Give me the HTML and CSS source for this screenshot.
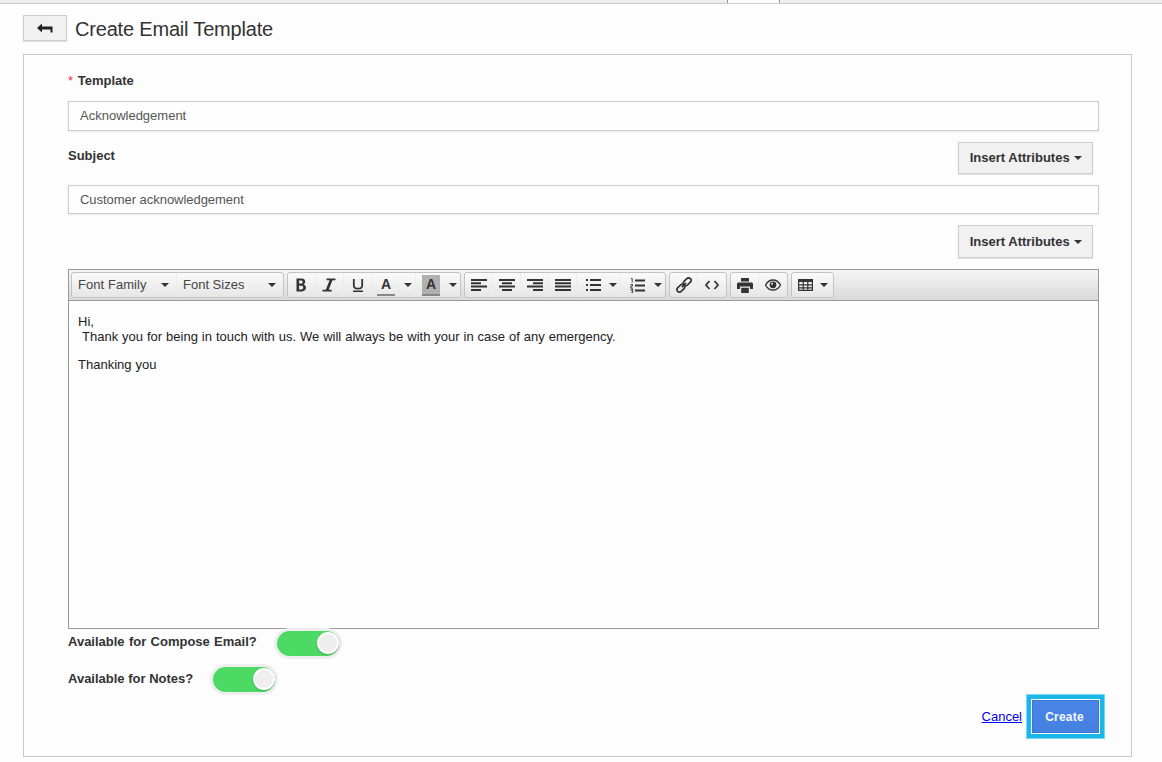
FILE: index.html
```html
<!DOCTYPE html>
<html lang="en">
<head>
<meta charset="utf-8">
<title>Create Email Template</title>
<link rel="stylesheet" href="styles.css">
</head>
<body>
<div class="topbar"><div class="tab"></div></div>
<header class="head">
  <button class="back" type="button" aria-label="Back">
    <svg width="16" height="10" viewBox="0 0 16 10"><path d="M0 5 L5 0.5 V3.5 H15.5 V9.5 H13.5 V6.5 H5 V9.5 Z" fill="#222"/></svg>
  </button>
  <h1 class="title">Create Email Template</h1>
</header>
<main class="panel">
  <div class="label first"><span class="req">*</span> Template</div>
  <div class="input">Acknowledgement</div>
  <div class="subject-row">
    <div class="label">Subject</div>
    <button class="attr" type="button">Insert Attributes <i class="caret"></i></button>
  </div>
  <div class="input second">Customer acknowledgement</div>
  <div class="attr-row"><button class="attr tall" type="button">Insert Attributes <i class="caret"></i></button></div>
  <section class="editor">
    <div class="toolbar">
      <div class="group">
        <span class="tb sel sel-a">Font Family <i class="tcaret"></i></span>
        <span class="tb sel sel-b">Font Sizes <i class="tcaret"></i></span>
      </div>
      <div class="group">
        <span class="tb w28 nudge"><svg width="12" height="14" viewBox="0 0 12 14"><path d="M1.500 .5h5c2.400 0 3.700 1.200 3.700 3.200 0 1.200-.6 2.200-1.600 2.700 1.400.4 2.400 1.600 2.400 3.200 0 2.200-1.600 3.900-4.100 3.900H1.500Z M4.100 2.600v3h2c1 0 1.500-.5 1.500-1.500S7.100 2.600 6.100 2.600Z M4.100 7.700v3.700h2.400c1.100 0 1.700-.7 1.700-1.800S7.600 7.700 6.500 7.700Z" fill="#333" fill-rule="evenodd"/></svg></span>
        <span class="tb w28 nudge"><svg width="14" height="14" viewBox="0 0 14 14"><path d="M4.500 .5h9v1.800h-3L6.700 11.700h3v1.800H.5v-1.800h3.300L7.600 2.300H4.500Z" fill="#333"/></svg></span>
        <span class="tb w28"><svg width="12" height="14" viewBox="0 0 12 14"><path d="M1.800 1v6.200c0 2.400 1.600 3.500 4.200 3.500s4.200-1.100 4.200-3.500V1" fill="none" stroke="#333" stroke-width="1.800"/><path d="M1 12.500h10v1.500H1Z" fill="#333"/></svg></span>
        <span class="tb w44 color c-a"><span class="letter">A<b class="bar"></b></span><i class="tcaret"></i></span>
        <span class="tb w44 color"><span class="letter hl">A<b class="bar"></b></span><i class="tcaret"></i></span>
      </div>
      <div class="group">
        <span class="tb w28"><svg width="16" height="12" viewBox="0 0 16 12"><path d="M0 0h16v2H0ZM0 3.300h10v2H0ZM0 6.600h16v2H0ZM0 10h10v2H0Z" fill="#333"/></svg></span>
        <span class="tb w28"><svg width="16" height="12" viewBox="0 0 16 12"><path d="M0 0h16v2H0ZM3 3.300h10v2H3ZM0 6.600h16v2H0ZM3 10h10v2H3Z" fill="#333"/></svg></span>
        <span class="tb w28"><svg width="16" height="12" viewBox="0 0 16 12"><path d="M0 0h16v2H0ZM6 3.300h10v2H6ZM0 6.600h16v2H0ZM6 10h10v2H6Z" fill="#333"/></svg></span>
        <span class="tb w28"><svg width="16" height="12" viewBox="0 0 16 12"><path d="M0 0h16v2H0ZM0 3.300h16v2H0ZM0 6.600h16v2H0ZM0 10h16v2H0Z" fill="#333"/></svg></span>
        <span class="tb w44 list"><svg width="15" height="12" viewBox="0 0 15 12"><path d="M0 0h2v2H0ZM0 5h2v2H0ZM0 10h2v2H0ZM4 0h11v2H4ZM4 5h11v2H4ZM4 10h11v2H4Z" fill="#333"/></svg><i class="tcaret"></i></span>
        <span class="tb w44 list"><svg width="15" height="15" viewBox="0 0 15 15"><path d="M5 1.500h10v2H5ZM5 6.500h10v2H5ZM5 11.500h10v2H5Z" fill="#333"/><path d="M1 .5h1.200v4M.5 6.500h2v1.500H.8V10h2M.5 11h2.200v1.500H1M2.700 12.500V15H.5" fill="none" stroke="#333" stroke-width=".9"/></svg><i class="tcaret"></i></span>
      </div>
      <div class="group">
        <span class="tb w28"><svg width="16" height="16" viewBox="0 0 16 16"><g fill="none" stroke="#333" stroke-width="1.700" transform="rotate(-45 8 8)"><rect x="-1" y="5.500" width="9" height="5" rx="2.500"/><rect x="8" y="5.500" width="9" height="5" rx="2.500"/><path d="M5 8h6"/></g></svg></span>
        <span class="tb w28"><svg width="14" height="10" viewBox="0 0 14 10"><path d="M4.500 1 1 5l3.500 4M9.500 1 13 5 9.500 9" fill="none" stroke="#333" stroke-width="1.700"/></svg></span>
      </div>
      <div class="group">
        <span class="tb w28"><svg width="16" height="15" viewBox="0 0 16 15"><path d="M4 0h8v3.500H4ZM1.500 4.500h13c.8 0 1.500.7 1.500 1.500v5h-3V8.500H3V11H0V6c0-.8.700-1.500 1.500-1.500ZM4.200 9.700h7.600V15H4.200Z" fill="#333"/></svg></span>
        <span class="tb w28"><svg width="16" height="12" viewBox="0 0 16 12"><path d="M.5 6C2.300 2.800 5 1 8 1s5.700 1.800 7.500 5C13.700 9.200 11 11 8 11S2.300 9.200.5 6Z" fill="none" stroke="#333" stroke-width="1.300"/><circle cx="8" cy="5.800" r="3.400" fill="#333"/><circle cx="7" cy="4.800" r="1" fill="#eee"/></svg></span>
      </div>
      <div class="group">
        <span class="tb w41"><svg width="15" height="12" viewBox="0 0 15 12"><path d="M0 0h15v12H0Z M1.200 3v2.200h3.400V3Zm4.600 0v2.200h3.400V3Zm4.600 0v2.200h3.400V3ZM1.200 6.400v1.900h3.400V6.400Zm4.600 0v1.900h3.400V6.400Zm4.600 0v1.900h3.400V6.400ZM1.200 9.500v1.300h3.400V9.500Zm4.600 0v1.300h3.400V9.500Zm4.600 0v1.300h3.400V9.500Z" fill="#333" fill-rule="evenodd"/></svg><i class="tcaret"></i></span>
      </div>
    </div>
    <div class="body">
      <div class="line-a">Hi,</div>
      <div class="indent">Thank you for being in touch with us. We will always be with your in case of any emergency.</div>
      <p class="closing">Thanking you</p>
    </div>
  </section>
  <div class="toggle-row r1"><span class="label">Available for Compose Email?</span><span class="switch"><span class="knob"></span></span></div>
  <div class="toggle-row r2"><span class="label">Available for Notes?</span><span class="switch"><span class="knob"></span></span></div>
  <div class="actions">
    <a class="cancel" href="#">Cancel</a>
    <button class="create" type="button">Create</button>
  </div>
</main>
</body>
</html>
```
FILE: styles.css
```css
* { box-sizing: border-box; }
html, body { height: 100%; }
body {
  margin: 0;
  background: #fdfdfd;
  font-family: "Liberation Sans", Arial, sans-serif;
  color: #333;
  overflow: hidden;
}
.topbar {
  height: 4px;
  background: #eee;
  border-bottom: 1px solid #ccc;
  padding-left: 727px;
}
.tab {
  width: 53px;
  height: 3px;
  background: #fdfdfd;
  border-left: 1px solid #999;
  border-right: 1px solid #999;
}
.head {
  display: flex;
  align-items: center;
  gap: 8px;
  margin: 11px 0 13px 23px;
  height: 26px;
}
.back {
  width: 44px;
  height: 26px;
  padding: 0;
  display: flex;
  align-items: center;
  justify-content: center;
  background: #f1f1f1;
  border: 1px solid #ccc;
  box-shadow: 0 1px 1px rgba(0,0,0,.1);
}
.title {
  margin: 0;
  padding-top: 2px;
  font: 400 20px/26px "Liberation Sans", Arial, sans-serif;
  letter-spacing: -.19px;
  color: #333;
}
.panel {
  margin-left: 23px;
  width: 1109px;
  height: 703px;
  padding: 0 32px 0 44px;
  border: 1px solid #c8c8c8;
}
.label {
  font-size: 13px;
  font-weight: 700;
  line-height: 16px;
  color: #333;
}
.label.first { padding-top: 18px; }
.req { color: #e33; font-weight: 400; margin-right: 1px; }
.input {
  margin-top: 13px;
  height: 30px;
  padding-left: 11px;
  border: 1px solid #ccc;
  box-shadow: 0 1px 2px rgba(0,0,0,.08);
  background: #fefefe;
  font-size: 13px;
  line-height: 28px;
  color: #555;
}
.first + .input { margin-top: 12px; }
.input.second { margin-top: 11px; height: 29px; line-height: 27px; letter-spacing: -.04px; }
.subject-row {
  display: flex;
  justify-content: space-between;
  margin-top: 11px;
  padding-right: 6px;
  height: 32px;
}
.subject-row .label { margin-top: 6px; }
.attr {
  width: 135px;
  height: 32px;
  padding: 0 0 2px 1px;
  background: #f1f1f1;
  border: 1px solid #ccc;
  box-shadow: 0 1px 1px rgba(0,0,0,.1);
  font: 700 13px "Liberation Sans", Arial, sans-serif;
  color: #333;
}
.attr.tall { height: 33px; padding-bottom: 1px; }
.caret {
  display: inline-block;
  margin-left: 1px;
  vertical-align: 2px;
  border-top: 4px solid #333;
  border-left: 4px solid transparent;
  border-right: 4px solid transparent;
}
.attr-row {
  display: flex;
  justify-content: flex-end;
  margin-top: 11px;
  padding-right: 6px;
}
.editor {
  margin-top: 11px;
  height: 360px;
  border: 1px solid #999;
  background: #fff;
  display: flex;
  flex-direction: column;
}
.toolbar {
  height: 31px;
  display: flex;
  gap: 3px;
  padding: 2px 0 0 2px;
  flex: none;
  background: linear-gradient(#f5f5f5, #d9d9d9);
  border-bottom: 1px solid #999;
}
.group {
  display: flex;
  height: 26px;
  border: 1px solid #c4c4c4;
  border-radius: 3px;
  background: linear-gradient(#fafafa, #e6e6e6);
}
.tb {
  display: flex;
  align-items: center;
  justify-content: center;
  height: 100%;
  border-right: 1px solid #ececec;
  position: relative;
}
.tb:last-child { border-right: 0; }
.sel {
  justify-content: flex-start;
  padding: 0 0 2px 6px;
  font-size: 13px;
  color: #444;
}
.sel-a { width: 105px; letter-spacing: .06px; }
.sel-b { width: 106px; }
.tcaret {
  position: absolute;
  right: 3px;
  top: 10px;
  border-top: 4px solid #333;
  border-left: 4px solid transparent;
  border-right: 4px solid transparent;
}
.sel .tcaret { right: 7px; }
.w28 { width: 28px; }
.nudge { padding-right: 2px; }
.w44 { width: 44px; justify-content: flex-start; padding-left: 6px; }
.c-a { padding-left: 5px; }
.list { padding-left: 9px; }
.w41 { width: 41px; justify-content: flex-start; padding-left: 6px; }
.w41 .tcaret { right: 5px; }
.letter {
  position: relative;
  display: block;
  width: 18px;
  height: 21px;
  font-size: 14px;
  font-weight: 700;
  line-height: 18px;
  text-align: center;
  color: #333;
}
.letter.hl { background: #b0b0b0; }
.bar {
  position: absolute;
  left: 0;
  right: 0;
  bottom: 0;
  height: 2px;
  background: #888;
}
.body {
  flex: 1;
  padding: 13px 9px;
  background: #fdfdfd;
  font-size: 13px;
  line-height: 16px;
  word-spacing: .33px;
  color: #222;
}
.line-a { height: 15px; }
.indent { padding-left: 4px; }
.closing { margin: 12px 0 0; }
.toggle-row {
  display: flex;
  align-items: center;
  gap: 20px;
  height: 28px;
}
.r1 .label { word-spacing: .7px; margin-bottom: 2px; }
.r2 { margin-top: 8px; }
.switch {
  position: relative;
  display: block;
  width: 62px;
  height: 25px;
  border-radius: 13px;
  background: #4cd964;
  box-shadow: 0 0 0 3px #eeeeee, 0 1px 3px rgba(0,0,0,.15);
}
.knob {
  position: absolute;
  right: 0;
  top: 1px;
  width: 22px;
  height: 22px;
  border-radius: 50%;
  background: #eee;
  border: 2px solid #fff;
  box-shadow: 0 1px 2px rgba(0,0,0,.2);
}
.actions {
  display: flex;
  justify-content: flex-end;
  align-items: center;
  gap: 4px;
  margin-top: 1px;
  margin-right: -6px;
}
.cancel {
  color: #00e;
  font-size: 13px;
  text-decoration: underline;
}
.create {
  width: 79px;
  height: 45px;
  padding: 0 2px 0 0;
  background: linear-gradient(#4a86e8, #4580e0);
  border: 1px solid #7fd6f2;
  box-shadow: inset 0 0 0 4px #1ab7ea, inset 0 0 0 5px #fff, inset 0 0 0 6px #3a76d8;
  font: 700 12px "Liberation Sans", Arial, sans-serif;
  letter-spacing: .2px;
  color: #f4f8ff;
}
```
